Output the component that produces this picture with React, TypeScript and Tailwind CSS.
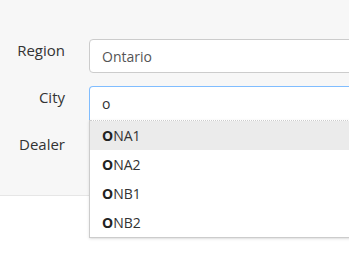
import { ReactNode } from 'react';

function Row({ label, children }: { label: string; children: ReactNode }) {
  return (
    <div className="flex items-start">
      <label className="w-[65px] shrink-0 text-right text-[15px] leading-[22px] text-[#333]">{label}</label>
      <div className="ml-[24px] flex-1 relative">{children}</div>
    </div>
  );
}

const options = ['NA1', 'NA2', 'NB1', 'NB2'];

export default function App() {
  return (
    <div className="w-[349px] h-[272px] bg-white overflow-hidden" style={{ fontFamily: '"Open Sans", sans-serif' }}>
      <div className="bg-[#f7f7f7] border-b border-[#e6e6e6] pt-[39px] pb-[28px] flex flex-col gap-[13px]">
        <Row label="Region">
          <div className="h-[34px] w-[280px] bg-white border border-[#ccc] rounded-[4px] pl-[12px] flex items-center text-[14px] text-[#555]">
            Ontario
          </div>
        </Row>
        <Row label="City">
          <div className="h-[34px] w-[280px] bg-white border border-[#80bdff] border-b-0 rounded-t-[4px] pl-[12px] flex items-center text-[14px] text-[#333]">
            o
          </div>
          <div className="absolute left-0 top-[34px] z-10 w-[280px] bg-white border border-[#ccc] border-t-0 shadow-sm">
            <div className="border-t border-dotted border-[#ccc]" />
            {options.map((o, i) => (
              <div
                key={o}
                className={
                  'h-[29px] pl-[12px] flex items-center text-[14px] text-[#333] ' +
                  (i === 0 ? 'bg-[#ebebeb]' : 'bg-white')
                }
              >
                <span className="font-bold text-[#222]">O</span>
                {o}
              </div>
            ))}
          </div>
        </Row>
        <Row label="Dealer">
          <div className="h-[34px] w-[280px] bg-white border border-[#ccc] rounded-[4px]" />
        </Row>
      </div>
    </div>
  );
}
